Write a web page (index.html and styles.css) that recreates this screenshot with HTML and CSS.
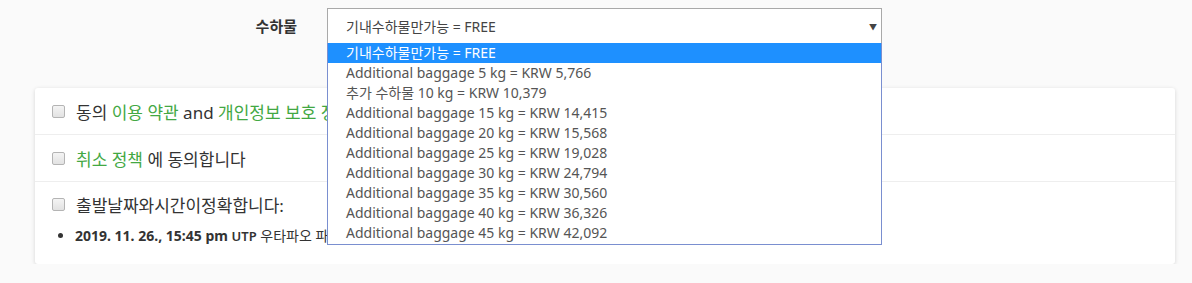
FILE: index.html
```html
<!DOCTYPE html>
<html>
<head>
    <title>수하물</title>
    <link rel="stylesheet" href="styles.css">
</head>
<body>
    <div class="field-row">
        <label class="field-label">수하물</label>
        <div class="select-wrap">
            <div class="select-box">
                <span>기내수하물만가능 = FREE</span>
                <span class="caret">&#9660;</span>
            </div>
            <ul class="select-list">
                <li class="active">기내수하물만가능 = FREE</li>
                <li>Additional baggage 5 kg = KRW 5,766</li>
                <li>추가 수하물 10 kg = KRW 10,379</li>
                <li>Additional baggage 15 kg = KRW 14,415</li>
                <li>Additional baggage 20 kg = KRW 15,568</li>
                <li>Additional baggage 25 kg = KRW 19,028</li>
                <li>Additional baggage 30 kg = KRW 24,794</li>
                <li>Additional baggage 35 kg = KRW 30,560</li>
                <li>Additional baggage 40 kg = KRW 36,326</li>
                <li>Additional baggage 45 kg = KRW 42,092</li>
            </ul>
        </div>
    </div>

    <div class="card">
        <div class="card-row">
            <span class="check"></span>
            <span>동의 <a href="#">이용 약관</a> and <a href="#">개인정보 보호 정책</a></span>
        </div>
        <div class="card-row">
            <span class="check"></span>
            <span><a href="#">취소 정책</a> 에 동의합니다</span>
        </div>
        <div class="card-row last">
            <div class="check-line">
                <span class="check"></span>
                <span>출발날짜와시간이정확합니다:</span>
            </div>
            <ul class="trip-list">
                <li><b>2019. 11. 26., 15:45 pm</b> <span class="code">UTP</span> 우타파오 파타야</li>
            </ul>
        </div>
    </div>
</body>
</html>
```

FILE: styles.css
```css
body {
    margin: 0;
    background-color: #fafafa;
    font-family: "Noto Sans", "Noto Sans CJK KR", sans-serif;
    color: #333;
}

.field-row {
    display: flex;
    padding-top: 8px;
    height: 80px;
}

.field-label {
    width: 327px;
    text-align: right;
    padding-right: 30px;
    box-sizing: border-box;
    font-size: 15px;
    font-weight: 600;
    line-height: 36px;
}

.select-wrap {
    position: relative;
    width: 555px;
}

.select-box {
    display: flex;
    justify-content: space-between;
    align-items: center;
    height: 36px;
    box-sizing: border-box;
    border: 1px solid #a9a9a9;
    background-color: #fff;
    padding: 0 4px 0 18px;
    font-size: 14px;
    color: #444;
}

.caret {
    font-size: 8px;
    color: #444;
}

.select-list {
    position: absolute;
    top: 35px;
    left: 0;
    right: 0;
    z-index: 10;
    margin: 0;
    padding: 0 0 1px 0;
    list-style: none;
    background-color: #fff;
    border: 1px solid #7a8fd0;
    border-top: none;
}

.select-list li {
    height: 20px;
    line-height: 20px;
    padding-left: 18px;
    font-size: 14px;
    color: #555;
    white-space: nowrap;
}

.select-list li.active {
    background-color: #1e90ff;
    color: #fff;
}

.card {
    margin-left: 35px;
    width: 1140px;
    background-color: #fff;
    border-radius: 3px;
    box-shadow: 0 1px 4px rgba(0, 0, 0, 0.15);
}

.card-row {
    display: flex;
    align-items: center;
    height: 46px;
    padding-left: 17px;
    border-bottom: 1px solid #eee;
    font-size: 17px;
}

.card-row.last {
    display: block;
    height: auto;
    border-bottom: none;
    padding-top: 10px;
    padding-bottom: 19px;
}

.check-line {
    display: flex;
    align-items: center;
}

.check {
    width: 11px;
    height: 11px;
    border: 1px solid #b4b4b4;
    border-radius: 2px;
    background: linear-gradient(#f4f4f4, #e2e2e2);
    margin-right: 11px;
}

a {
    color: #43a843;
    text-decoration: none;
}

.trip-list {
    margin: 8px 0 0 0;
    padding-left: 23px;
    font-size: 14px;
}

.trip-list b {
    font-weight: 700;
}

.code {
    font-size: 13px;
    font-weight: 600;
}
```
